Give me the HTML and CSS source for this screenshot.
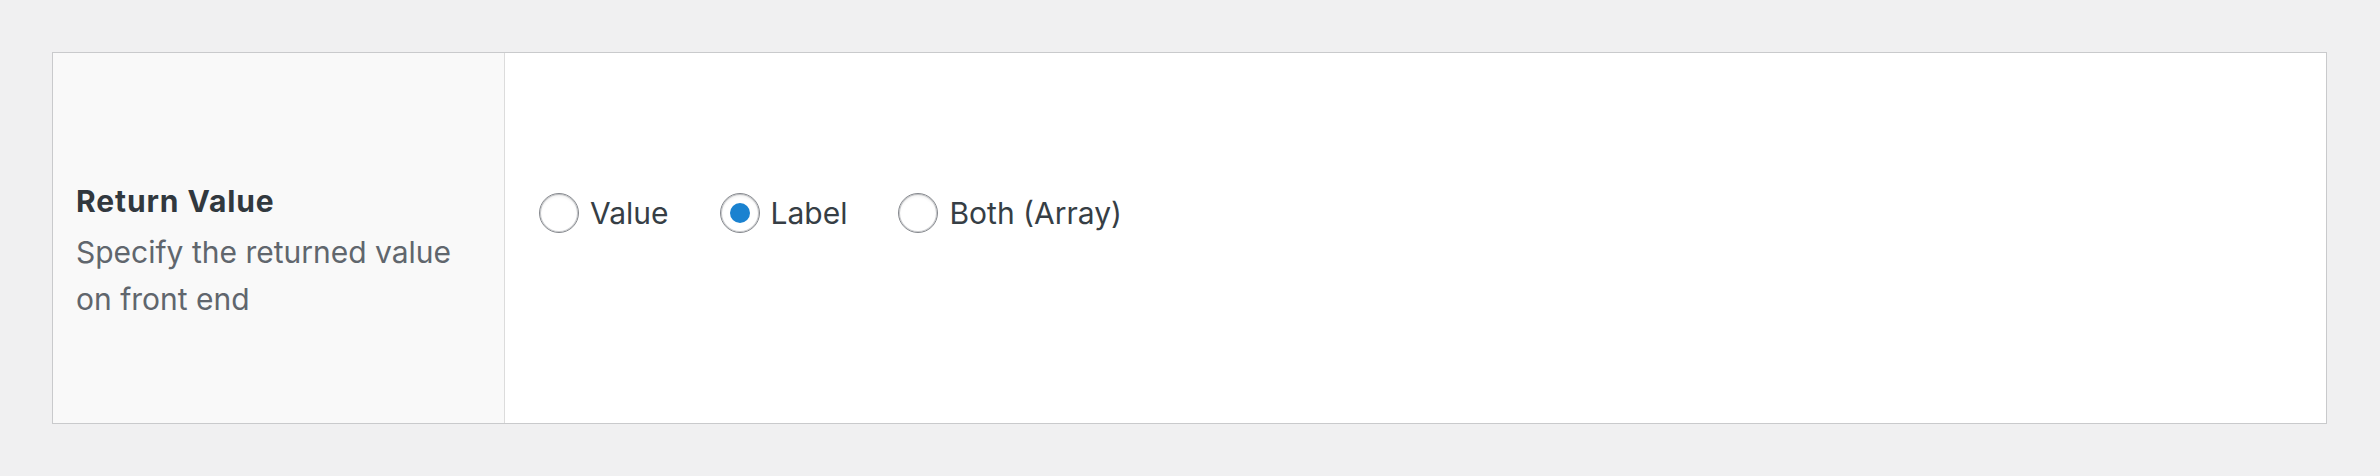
FILE: index.html
```html
<!DOCTYPE html>
<html>
<head>
<meta charset="utf-8">
<link rel="stylesheet" href="styles.css">
</head>
<body>
<div class="page">
  <div class="field">
    <div class="field-label">
      <div class="label-title">Return Value</div>
      <div class="label-desc">Specify the returned value<br>on front end</div>
    </div>
    <div class="field-input">
      <ul class="radio-list">
        <li class="radio-item"><span class="radio"></span><span class="radio-text">Value</span></li>
        <li class="radio-item"><span class="radio checked"></span><span class="radio-text">Label</span></li>
        <li class="radio-item"><span class="radio"></span><span class="radio-text">Both (Array)</span></li>
      </ul>
    </div>
  </div>
</div>
</body>
</html>
```

FILE: styles.css
```css
html, body {
  margin: 0;
  padding: 0;
  background: #f0f0f1;
}
.page {
  padding: 52px 53px 52px 52px;
  font-family: Inter, "Noto Sans", "Liberation Sans", sans-serif;
}
.field {
  display: flex;
  height: 370px;
  border: 1px solid #c9cacc;
  background: #ffffff;
}
.field-label {
  width: 428px;
  flex: none;
  background: #f9f9f9;
  border-right: 1px solid #dcdcdc;
  padding: 125px 0 0 23px;
  box-sizing: content-box;
}
.label-title {
  font-size: 30px;
  font-weight: 700;
  line-height: 46px;
  color: #31383e;
  margin-bottom: 5px;
  letter-spacing: 0.9px;
}
.label-desc {
  font-size: 30px;
  line-height: 47.4px;
  color: #60666d;
}
.field-input {
  flex: 1;
  padding: 140px 0 0 34px;
}
.radio-list {
  list-style: none;
  margin: 0;
  padding: 0;
  display: flex;
  align-items: center;
}
.radio-item {
  display: flex;
  align-items: center;
  height: 40px;
  margin-right: 51px;
}
.radio {
  width: 40px;
  height: 40px;
  box-sizing: border-box;
  border-radius: 50%;
  border: 1px solid #85888d;
  background: #fff;
  box-shadow: inset 0 0 0 1px rgba(140,143,148,0.45), inset 0 2px 3px rgba(0,0,0,0.08);
  display: flex;
  align-items: center;
  justify-content: center;
  flex: none;
}
.radio.checked::after {
  content: "";
  width: 20px;
  height: 20px;
  border-radius: 50%;
  background: #1a82d0;
}
.radio-text {
  margin-left: 11px;
  font-size: 30px;
  color: #363e45;
  line-height: 40px;
}
```
